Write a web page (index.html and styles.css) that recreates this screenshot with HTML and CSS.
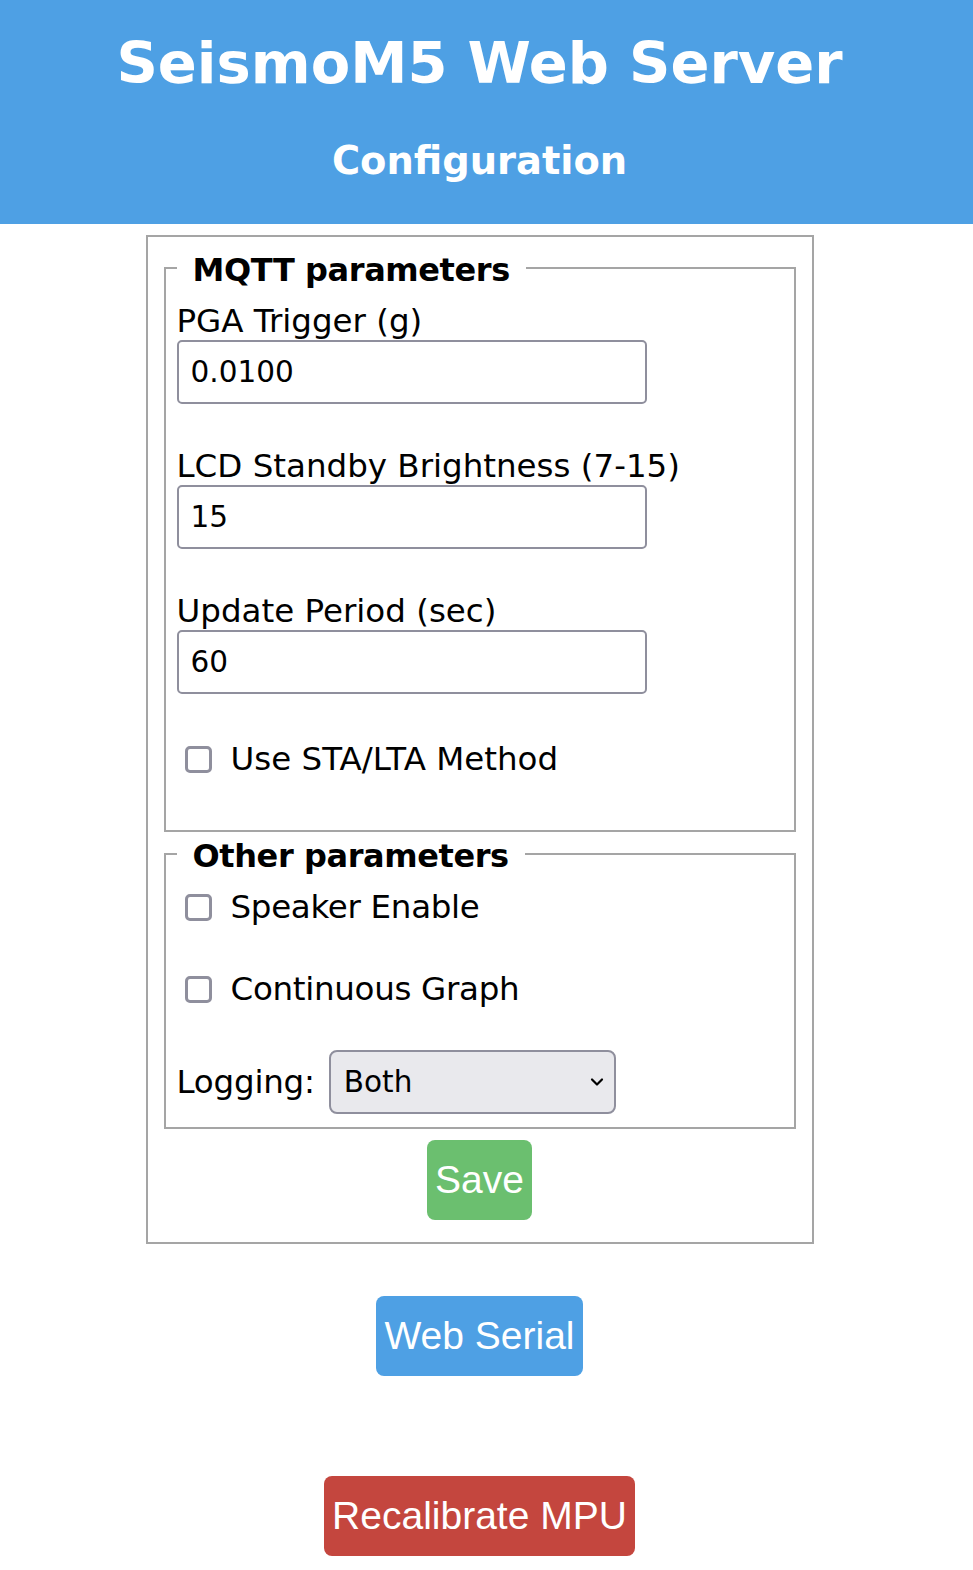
FILE: index.html
```html
<!DOCTYPE html>
<html lang="en">
<head>
<meta charset="utf-8">
<title>SeismoM5 Web Server</title>
<link rel="stylesheet" href="styles.css">
</head>
<body>
<header class="hero">
  <h1 class="hero-title">SeismoM5 Web Server</h1>
  <h2 class="hero-sub">Configuration</h2>
</header>
<main class="page">
  <form class="panel">
    <fieldset class="group group-mqtt">
      <legend class="group-legend">MQTT parameters</legend>
      <div class="field field-first">
        <label class="field-label" for="pga">PGA Trigger (g)</label>
        <input class="text-input" id="pga" type="text" value="0.0100">
      </div>
      <div class="field">
        <label class="field-label" for="lcd">LCD Standby Brightness (7-15)</label>
        <input class="text-input" id="lcd" type="text" value="15">
      </div>
      <div class="field">
        <label class="field-label" for="upd">Update Period (sec)</label>
        <input class="text-input" id="upd" type="text" value="60">
      </div>
      <label class="check check-sta"><input class="check-box" type="checkbox"><span>Use STA/LTA Method</span></label>
    </fieldset>
    <fieldset class="group group-other">
      <legend class="group-legend">Other parameters</legend>
      <label class="check check-first"><input class="check-box" type="checkbox"><span>Speaker Enable</span></label>
      <label class="check check-next"><input class="check-box" type="checkbox"><span>Continuous Graph</span></label>
      <div class="logging">
        <label class="logging-label" for="log">Logging:</label>
        <span class="select-wrap">
          <select class="select" id="log">
            <option>Both</option>
            <option>SD Card</option>
            <option>MQTT</option>
            <option>None</option>
          </select>
          <svg class="select-chevron" width="14" height="10" viewBox="0 0 14 10" aria-hidden="true"><path d="M2 2.5 L7 7.5 L12 2.5" fill="none" stroke="#000" stroke-width="2.2" stroke-linecap="round" stroke-linejoin="round"/></svg>
        </span>
      </div>
    </fieldset>
    <div class="actions actions-save">
      <button class="btn btn-save" type="button">Save</button>
    </div>
  </form>
  <div class="actions actions-serial">
    <button class="btn btn-serial" type="button">Web Serial</button>
  </div>
  <div class="actions actions-recal">
    <button class="btn btn-recal" type="button">Recalibrate MPU</button>
  </div>
</main>
</body>
</html>
```

FILE: styles.css
```css
* { box-sizing: border-box; }

html, body {
  margin: 0;
  padding: 0;
  background: #ffffff;
}

body {
  font-family: "DejaVu Sans", Verdana, sans-serif;
  color: #000;
}

.hero {
  background: #4ea0e4;
  color: #fff;
  height: 224px;
  padding: 28px 14px 0 0;
  text-align: center;
}

.hero-title {
  margin: 0;
  font-size: 57.5px;
  line-height: 71px;
  font-weight: bold;
}

.hero-sub {
  margin: 40px 0 0;
  font-size: 38.4px;
  line-height: 44px;
  font-weight: bold;
}

.page {
  width: 959px;
  display: flex;
  flex-direction: column;
  align-items: center;
  padding-bottom: 16px;
}

.panel {
  width: 668px;
  margin-top: 11px;
  border: 2px solid #a5a5a5;
  padding: 10px 16px 22px;
  display: flex;
  flex-direction: column;
}

.group {
  margin: 0;
  border: 2px solid #a5a5a5;
  padding: 13px 11px 0;
  min-width: 0;
}

.group-mqtt { padding-bottom: 52px; }
.group-other { margin-top: 1px; padding-bottom: 13px; }

.group-legend {
  font-size: 32px;
  line-height: 38px;
  font-weight: bold;
  letter-spacing: -0.4px;
  padding: 4px 16px 0;
}

.field {
  display: flex;
  flex-direction: column;
  align-items: flex-start;
  margin-top: 43px;
}
.field-first { margin-top: 0; }

.field-label {
  font-size: 32.5px;
  line-height: 38px;
}

.text-input {
  width: 470px;
  height: 64px;
  border: 2px solid #8f8f9d;
  border-radius: 5px;
  padding: 0 12px;
  font-family: "DejaVu Sans", Verdana, sans-serif;
  font-size: 29.5px;
  color: #000;
  background: #fff;
}

.check {
  display: flex;
  align-items: center;
  font-size: 32.5px;
  line-height: 38px;
  height: 38px;
}
.check-sta { margin-top: 46px; }
.check-first { margin-top: 0; }
.check-next { margin-top: 44px; }
.check-first span, .check-next span { letter-spacing: -0.3px; }

.check-box {
  appearance: none;
  -webkit-appearance: none;
  width: 27px;
  height: 27px;
  margin: 0 19px 0 8px;
  border: 3px solid #8f8f9d;
  border-radius: 5px;
  background: #fff;
  flex: none;
}

.logging {
  margin-top: 42px;
  display: flex;
  align-items: center;
  height: 64px;
}

.logging-label {
  font-size: 32.5px;
  line-height: 38px;
  letter-spacing: -0.2px;
  margin-right: 14px;
}

.select-wrap {
  position: relative;
  display: inline-block;
}

.select {
  appearance: none;
  -webkit-appearance: none;
  width: 287px;
  height: 64px;
  border: 2px solid #8f8f9d;
  border-radius: 8px;
  background: #e9e9ed;
  padding: 0 13px;
  font-family: "DejaVu Sans", Verdana, sans-serif;
  font-size: 29.5px;
  color: #000;
  display: block;
}

.select-chevron {
  position: absolute;
  right: 12px;
  top: 27px;
  pointer-events: none;
}

.actions {
  display: flex;
  justify-content: center;
}
.actions-save { margin-top: 11px; }
.actions-serial { margin-top: 52px; }
.actions-recal { margin-top: 100px; }

.btn {
  font-family: "Liberation Sans", Arial, sans-serif;
  font-size: 39px;
  height: 80px;
  padding: 0 8px;
  border: none;
  border-radius: 8px;
  color: #fff;
  cursor: pointer;
}

.btn-save { background: #6bbf6f; }
.btn-serial { background: #4ea0e4; }
.btn-recal { background: #c4463e; }
```
